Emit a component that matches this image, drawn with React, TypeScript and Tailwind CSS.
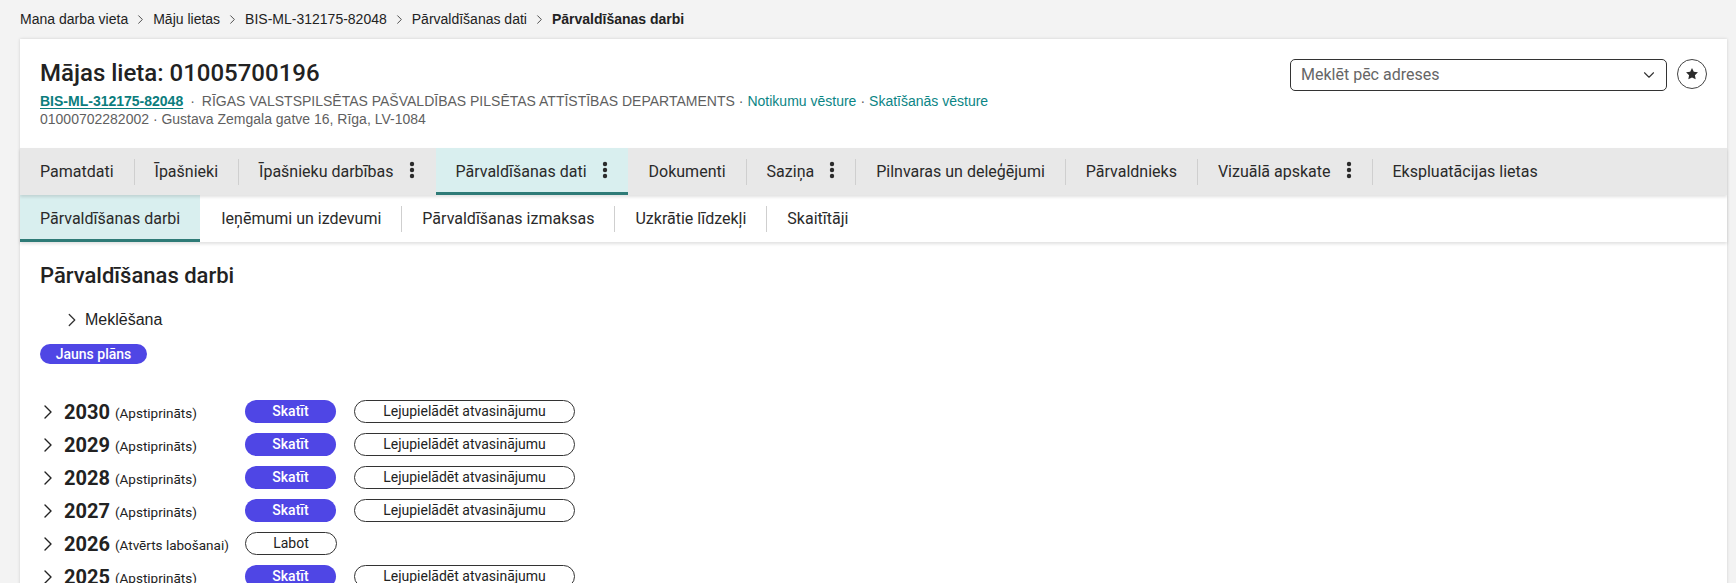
import React from "react";
import { ChevronRight, ChevronDown } from "lucide-react";

const roboto = "font-['Roboto',sans-serif]";
const arial = "font-['Liberation_Sans',Arial,sans-serif]";

type Tab = { label: string; menu?: boolean; active?: boolean };

const mainTabs: Tab[] = [
  { label: "Pamatdati" },
  { label: "Īpašnieki" },
  { label: "Īpašnieku darbības", menu: true },
  { label: "Pārvaldīšanas dati", menu: true, active: true },
  { label: "Dokumenti" },
  { label: "Saziņa", menu: true },
  { label: "Pilnvaras un deleģējumi" },
  { label: "Pārvaldnieks" },
  { label: "Vizuālā apskate", menu: true },
  { label: "Ekspluatācijas lietas" },
];

const subTabs: Tab[] = [
  { label: "Pārvaldīšanas darbi", active: true },
  { label: "Ieņēmumi un izdevumi" },
  { label: "Pārvaldīšanas izmaksas" },
  { label: "Uzkrātie līdzekļi" },
  { label: "Skaitītāji" },
];

const years = [
  { year: 2030, status: "Apstiprināts" },
  { year: 2029, status: "Apstiprināts" },
  { year: 2028, status: "Apstiprināts" },
  { year: 2027, status: "Apstiprināts" },
  { year: 2026, status: "Atvērts labošanai" },
  { year: 2025, status: "Apstiprināts" },
];

function Kebab() {
  return (
    <svg width="6" height="18" viewBox="0 0 6 18" className="ml-[15px] shrink-0">
      <circle cx="3" cy="3" r="2.2" fill="#2b2b2b" />
      <circle cx="3" cy="9" r="2.2" fill="#2b2b2b" />
      <circle cx="3" cy="15" r="2.2" fill="#2b2b2b" />
    </svg>
  );
}

function TabBar({ tabs, bg }: { tabs: Tab[]; bg: string }) {
  return (
    <div className={`flex h-[47px] items-stretch ${bg} shadow-[0_2px_3px_rgba(0,0,0,0.12)] ${roboto} text-[16px] text-[#2a2a2a]`}>
      {tabs.map((t, i) => (
        <React.Fragment key={t.label}>
          {i > 0 && !t.active && !tabs[i - 1].active ? (
            <div className="flex items-center">
              <span className="h-[26px] w-px bg-[#cfcfcf]" />
            </div>
          ) : i > 0 ? (
            <span className="w-px" />
          ) : null}
          <div
            className={`flex items-center px-5 border-b-[3px] ${
              t.active ? "bg-[#d9efef] border-[#2e7b77]" : "border-transparent"
            }`}
          >
            <span className="pt-[3px]">{t.label}</span>
            {t.menu ? <Kebab /> : null}
          </div>
        </React.Fragment>
      ))}
    </div>
  );
}

function Crumb({ children, last }: { children: React.ReactNode; last?: boolean }) {
  return (
    <span className="flex items-center">
      <span className={last ? "font-bold" : ""}>{children}</span>
      {!last ? <ChevronRight className="mx-[5px] h-[15px] w-[15px] text-[#444]" strokeWidth={1.5} /> : null}
    </span>
  );
}

export default function App() {
  return (
    <div className="min-h-screen w-full bg-[#f3f3f3] pl-5 pr-[9px]">
      <nav className={`flex h-[39px] items-center ${arial} text-[14px] text-[#222] pb-[1px]`}>
        <Crumb>Mana darba vieta</Crumb>
        <Crumb>Māju lietas</Crumb>
        <Crumb>BIS-ML-312175-82048</Crumb>
        <Crumb>Pārvaldīšanas dati</Crumb>
        <Crumb last>Pārvaldīšanas darbi</Crumb>
      </nav>

      <div className="bg-white shadow-[0_0_3px_rgba(0,0,0,0.15)] pb-10">
        <header className="flex justify-between px-5 pt-5 h-[109px]">
          <div>
            <h1 className={`${roboto} text-[24px] font-medium leading-[28px] text-[#222]`}>Mājas lieta: 01005700196</h1>
            <div className={`${arial} mt-[5px] text-[14px] leading-[18px] text-[#5f5f5f]`}>
              <a href="#" className="font-bold text-[#0b7d7d] underline underline-offset-2">
                BIS-ML-312175-82048
              </a>
              <span className="mx-[7px]">·</span>
              <span>RĪGAS VALSTSPILSĒTAS PAŠVALDĪBAS PILSĒTAS ATTĪSTĪBAS DEPARTAMENTS</span>
              <span className="mx-[4px]">·</span>
              <a href="#" className="text-[#0b8585]">Notikumu vēsture</a>
              <span className="mx-[4px]">·</span>
              <a href="#" className="text-[#0b8585]">Skatīšanās vēsture</a>
            </div>
            <div className={`${arial} text-[14px] leading-[18px] text-[#5f5f5f]`}>
              01000702282002 · Gustava Zemgala gatve 16, Rīga, LV-1084
            </div>
          </div>
          <div className="flex items-start gap-[10px]">
            <div className={`flex h-[32px] w-[377px] items-center justify-between rounded-[5px] border border-[#333] pl-[10px] pr-[8px] ${roboto} text-[16px] text-[#666]`}>
              <span>Meklēt pēc adreses</span>
              <ChevronDown className="h-[18px] w-[18px] text-[#333]" strokeWidth={1.5} />
            </div>
            <button className="flex h-[30px] w-[30px] items-center justify-center rounded-full border border-[#444]">
              <svg width="14" height="14" viewBox="0 0 24 24">
                <path
                  d="M12 1.8l3.1 6.5 7.1.9-5.2 4.9 1.3 7.1L12 17.8l-6.3 3.4 1.3-7.1-5.2-4.9 7.1-.9z"
                  fill="#2b2b2b"
                />
              </svg>
            </button>
          </div>
        </header>

        <div className="relative z-10">
          <TabBar tabs={mainTabs} bg="bg-[#e8e8e8]" />
        </div>
        <TabBar tabs={subTabs} bg="bg-white" />

        <section className="px-5 pt-[21px]">
          <h2 className={`${roboto} text-[22px] font-medium leading-[26px] text-[#222]`}>Pārvaldīšanas darbi</h2>

          <div className={`mt-[19px] flex items-center pl-[21px] ${arial} text-[16px] text-[#222]`}>
            <ChevronRight className="h-[22px] w-[22px] text-[#333]" strokeWidth={1.4} />
            <span className="ml-[2px]">Meklēšana</span>
          </div>

          <button className={`mt-[12px] flex h-[20px] w-[107px] items-center justify-center rounded-full bg-[#4f46e5] ${roboto} text-[14px] font-medium text-white`}>
            Jauns plāns
          </button>

          <div className="mt-[31px] flex flex-col">
            {years.map((y) => (
              <div key={y.year} className={`flex h-[33px] items-center ${roboto}`}>
                <div className="flex w-[205px] items-center">
                  <ChevronRight className="h-[24px] w-[24px] -ml-[4px] text-[#222]" strokeWidth={1.4} />
                  <span className="ml-[4px] text-[20px] font-bold text-[#222] leading-none">{y.year}</span>
                  <span className="ml-[5px] mt-[4px] text-[13.5px] text-[#222]">({y.status})</span>
                </div>
                {y.status === "Apstiprināts" ? (
                  <>
                    <button className="flex h-[23px] w-[91px] items-center justify-center rounded-full bg-[#4f46e5] text-[14px] font-medium text-white">
                      Skatīt
                    </button>
                    <button className="ml-[18px] flex h-[23px] w-[221px] items-center justify-center rounded-full border border-[#333] text-[14px] text-[#222]">
                      Lejupielādēt atvasinājumu
                    </button>
                  </>
                ) : (
                  <button className="flex h-[23px] w-[92px] items-center justify-center rounded-full border border-[#333] text-[14px] text-[#222]">
                    Labot
                  </button>
                )}
              </div>
            ))}
          </div>
        </section>
      </div>
    </div>
  );
}
